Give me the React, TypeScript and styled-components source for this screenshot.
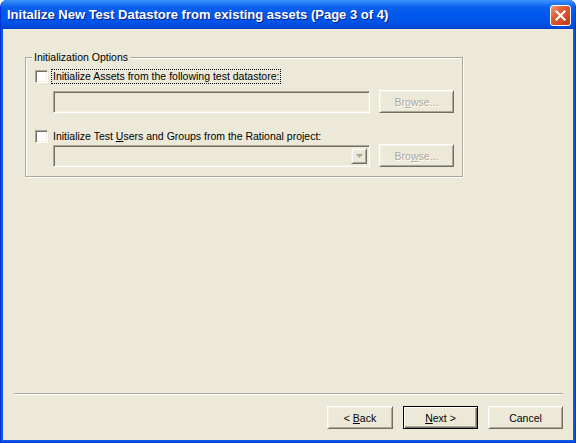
import React from 'react'
import styled, { createGlobalStyle } from 'styled-components'

const GlobalStyle = createGlobalStyle`
    html, body {
        margin: 0;
        padding: 0;
        background: #ffffff;
    }
    body {
        font-family: "Liberation Sans", Arial, sans-serif;
        font-size: 10.5px;
        color: #000;
    }
`

const Window = styled.div`
    width: 576px;
    height: 443px;
    box-sizing: border-box;
    display: flex;
    flex-direction: column;
    background: #0a59e4;
    border: 1px solid #0831d9;
    border-top: none;
    border-radius: 7px 7px 0 0;
    overflow: hidden;
`

const TitleBar = styled.div`
    height: 29px;
    flex: none;
    display: flex;
    align-items: center;
    justify-content: space-between;
    padding: 0 4px 0 6px;
    background: linear-gradient(
        to bottom,
        #3d95ff 0%,
        #2a80f6 10%,
        #0a60ec 24%,
        #0058ee 50%,
        #0055e8 75%,
        #0049d8 92%,
        #0041cc 100%
    );
`

const Title = styled.span`
    font-family: "Liberation Sans", Arial, sans-serif;
    font-weight: bold;
    font-size: 13px;
    color: #ffffff;
    text-shadow: 1px 1px 0 #0a1e8a;
`

const CloseButton = styled.div`
    width: 21px;
    height: 21px;
    box-sizing: border-box;
    border: 1px solid #ffffff;
    border-radius: 3px;
    background: linear-gradient(135deg, #f29a7e 0%, #e35d38 35%, #d44a24 70%, #c2371a 100%);
    display: flex;
    align-items: center;
    justify-content: center;
    margin-top: 1px;
`

const Client = styled.div`
    flex: 1;
    margin: 0 2px 2px 2px;
    background: #ece9d8;
    display: flex;
    flex-direction: column;
`

const Page = styled.div`
    flex: 1;
    padding: 22px 0 0 22px;
`

const GroupBox = styled.fieldset`
    width: 438px;
    box-sizing: border-box;
    margin: 0;
    padding: 0 8px 9px 9px;
    border: 1px solid #aca899;
    box-shadow: inset 1px 1px 0 #ffffff, 1px 1px 0 #ffffff;
`

const Legend = styled.legend`
    margin-left: -3px;
    padding: 0 2px;
    line-height: 13px;
    background: #ece9d8;
`

const CheckRow = styled.label<{ $top: number }>`
    display: flex;
    align-items: center;
    gap: 4px;
    height: 16px;
    margin-top: ${p => p.$top}px;
`

const CheckBox = styled.span`
    width: 13px;
    height: 13px;
    box-sizing: border-box;
    flex: none;
    background: #ffffff;
    border: 1px solid;
    border-color: #aca899 #ffffff #ffffff #aca899;
    box-shadow: inset 1px 1px 0 #716f64, inset -1px -1px 0 #f1efe2;
`

const LabelText = styled.span<{ $focused?: boolean }>`
    white-space: nowrap;
    line-height: 13px;
    padding: 0 1px;
    margin-left: -1px;
    border: 1px dotted ${p => (p.$focused ? '#000' : 'transparent')};
`

const FieldRow = styled.div<{ $top: number }>`
    display: flex;
    align-items: center;
    gap: 9px;
    margin-top: ${p => p.$top}px;
    padding-left: 18px;
`

const Sunken = styled.div`
    width: 317px;
    height: 22px;
    box-sizing: border-box;
    border: 1px solid;
    border-color: #aca899 #ffffff #ffffff #aca899;
    box-shadow: inset 1px 1px 0 #716f64, inset -1px -1px 0 #f1efe2;
    background: #ece9d8;
    display: flex;
    justify-content: flex-end;
    padding: 2px;
`

const ComboArrow = styled.div`
    width: 16px;
    height: 16px;
    box-sizing: border-box;
    border: 1px solid;
    border-color: #f1efe2 #716f64 #716f64 #f1efe2;
    box-shadow: inset 1px 1px 0 #ffffff, inset -1px -1px 0 #aca899;
    display: flex;
    align-items: center;
    justify-content: center;
`

const Button = styled.div<{ $width: number; $default?: boolean; $disabled?: boolean }>`
    width: ${p => p.$width}px;
    height: 23px;
    box-sizing: border-box;
    display: flex;
    align-items: center;
    justify-content: center;
    white-space: pre;
    background: #ece9d8;
    color: ${p => (p.$disabled ? '#aca899' : '#000')};
    text-shadow: ${p => (p.$disabled ? '1px 1px 0 #ffffff' : 'none')};
    border: 1px solid;
    border-color: ${p => (p.$default ? '#000' : '#ffffff #716f64 #716f64 #ffffff')};
    box-shadow: ${p =>
        p.$default
            ? 'inset 1px 1px 0 #ffffff, inset -1px -1px 0 #716f64, inset -2px -2px 0 #aca899'
            : 'inset 1px 1px 0 #f1efe2, inset -1px -1px 0 #aca899'};
`

const Separator = styled.div`
    height: 2px;
    margin: 0 10px 0 11px;
    border-top: 1px solid #aca899;
    border-bottom: 1px solid #ffffff;
    box-sizing: border-box;
`

const ButtonBar = styled.div`
    display: flex;
    justify-content: flex-end;
    gap: 10px;
    padding: 11px 10px 11px 0;
`

const CloseIcon = () => (
    <svg width="13" height="13" viewBox="0 0 13 13">
        <path d="M2.5 2.5 L10.5 10.5 M10.5 2.5 L2.5 10.5" stroke="#ffffff" strokeWidth="2.2" strokeLinecap="square" />
    </svg>
)

const DownArrow = () => (
    <svg width="7" height="4" viewBox="0 0 7 4">
        <path d="M0 0 H7 L3.5 4 Z" fill="#aca899" />
    </svg>
)

export default function App() {
    return (
        <>
            <GlobalStyle />
            <Window>
                <TitleBar>
                    <Title>Initalize New Test Datastore from existing assets (Page 3 of 4)</Title>
                    <CloseButton>
                        <CloseIcon />
                    </CloseButton>
                </TitleBar>
                <Client>
                    <Page>
                        <GroupBox>
                            <Legend>Initialization Options</Legend>
                            <CheckRow $top={4}>
                                <CheckBox />
                                <LabelText $focused>
                                    Initialize Assets from the following test datastore:
                                </LabelText>
                            </CheckRow>
                            <FieldRow $top={6}>
                                <Sunken />
                                <Button $width={75} $disabled>
                                    Br<u>o</u>wse...
                                </Button>
                            </FieldRow>
                            <CheckRow $top={15}>
                                <CheckBox />
                                <LabelText>
                                    Initialize Test <u>U</u>sers and Groups from the Rational project:
                                </LabelText>
                            </CheckRow>
                            <FieldRow $top={0}>
                                <Sunken>
                                    <ComboArrow>
                                        <DownArrow />
                                    </ComboArrow>
                                </Sunken>
                                <Button $width={75} $disabled>
                                    Bro<u>w</u>se...
                                </Button>
                            </FieldRow>
                        </GroupBox>
                    </Page>
                    <Separator />
                    <ButtonBar>
                        <Button $width={66}>
                            {'< '}
                            <u>B</u>ack
                        </Button>
                        <Button $width={75} $default>
                            <u>N</u>ext{' >'}
                        </Button>
                        <Button $width={75}>Cancel</Button>
                    </ButtonBar>
                </Client>
            </Window>
        </>
    )
}
